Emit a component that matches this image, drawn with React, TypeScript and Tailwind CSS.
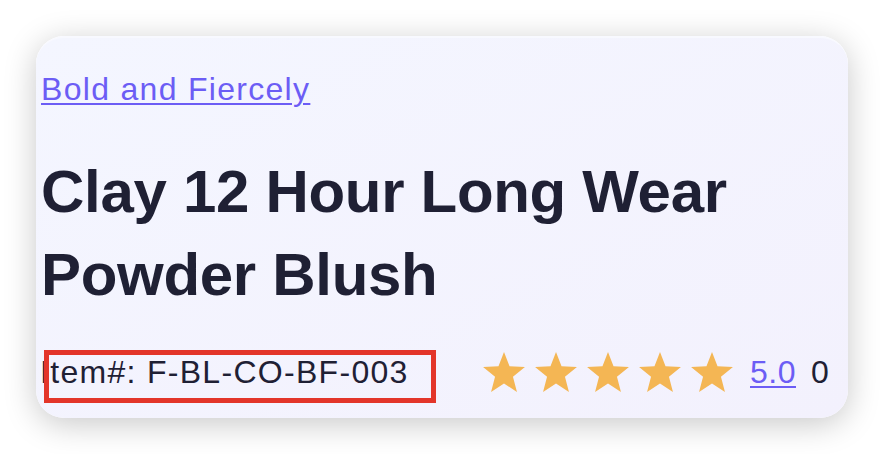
import React from "react";

const Star = () => (
  <svg width="42" height="40" viewBox="1 0.6 22 21" className="shrink-0">
    <path
      d="M12 0.6 L14.9 8.1 L23 8.5 L16.7 13.6 L18.8 21.6 L12 17.1 L5.2 21.6 L7.3 13.6 L1 8.5 L9.1 8.1 Z"
      fill="#f4b654"
    />
  </svg>
);

export default function App() {
  return (
    <div className="w-[884px] h-[454px] bg-white overflow-hidden pt-[36px] pl-[36px]" style={{ fontFamily: '"Liberation Sans", Arial, sans-serif' }}>
      <div className="relative w-[812px] h-[382px] rounded-[28px] bg-gradient-to-br from-[#f4f6ff] to-[#f3f1fd] shadow-[0_6px_32px_rgba(0,0,0,0.22)] border-t-2 border-[#f8f9ff] pl-[5px] pt-[31px]">
        <a href="#" className="block text-[32px] leading-[40px] tracking-[1.3px] text-[#6c5df5] underline decoration-2 underline-offset-[3px]">
          Bold and Fiercely
        </a>
        <h1 className="mt-[41px] text-[60px] leading-[83px] font-bold tracking-[-0.3px] text-[#1f2034]">
          Clay 12 Hour Long Wear
          <br />
          Powder Blush
        </h1>
        <div className="mt-[38px] flex items-center h-[36px]">
          <span className="-ml-[1px] text-[32px] leading-[36px] tracking-[1.3px] text-[#1f2034] w-[443px] shrink-0">
            Item#: F-BL-CO-BF-003
          </span>
          <div className="flex items-center gap-[10px]">
            <Star />
            <Star />
            <Star />
            <Star />
            <Star />
          </div>
          <a href="#" className="ml-[17px] text-[32px] leading-[36px] tracking-[0.5px] text-[#6c5df5] underline decoration-2 underline-offset-[3px]">
            5.0
          </a>
          <span className="ml-[15px] text-[32px] leading-[36px] text-[#1f2034]">0</span>
        </div>
        <div className="absolute left-[8px] top-[312px] w-[392px] h-[53px] border-[5px] border-[#e3352a]" />
      </div>
    </div>
  );
}
